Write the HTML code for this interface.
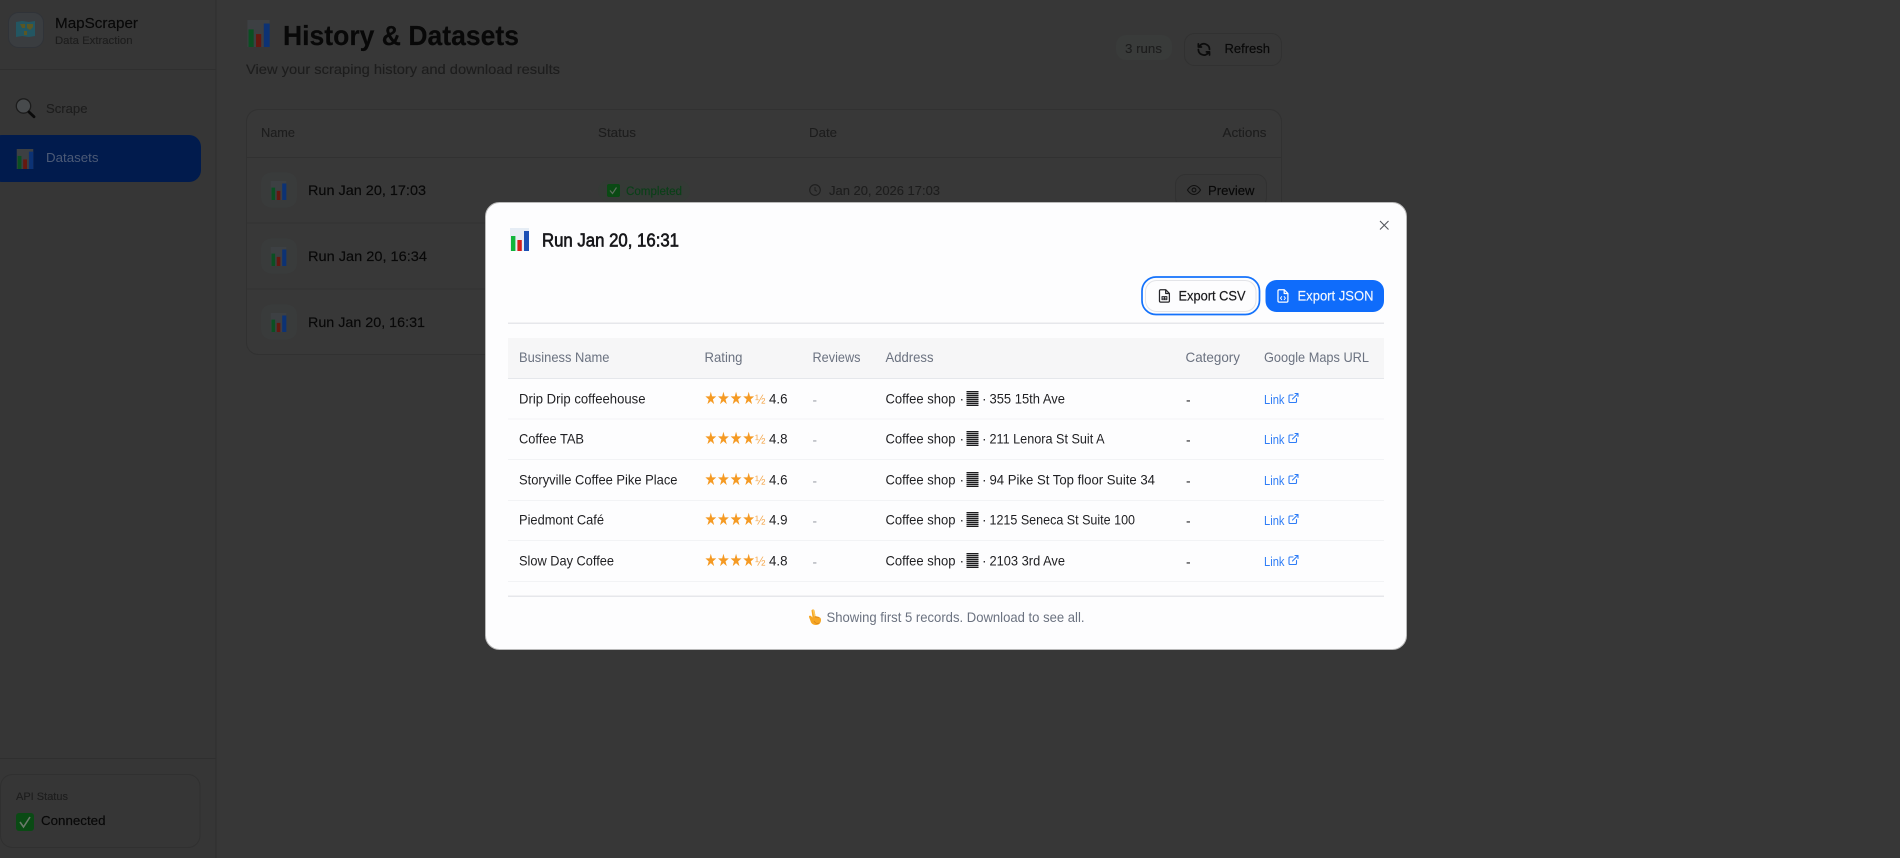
<!DOCTYPE html>
<html lang="en"><head><meta charset="utf-8"><title>MapScraper - History &amp; Datasets</title>
<style>
html,body{margin:0;padding:0;width:1900px;height:858px;overflow:hidden;background:#363636}
svg{display:block;position:absolute;left:0;top:0}
text{font-family:"Liberation Sans",sans-serif;white-space:pre}
.h{font-size:13.8px;fill:#6b7280}
.c{font-size:13.8px;fill:#1f1f22}
.g{fill:#9a9ea6;font-size:13.5px}
.lk{font-size:13px;fill:#2f7df6}
.st{font-family:"DejaVu Sans",sans-serif;font-size:17px;fill:#f59a23}
.hf{font-size:12.5px;fill:#f5ac55}
.d{fill:#080808;stroke:#080808;stroke-width:.15px}
.m{fill:#1d1d1d;stroke:#1d1d1d;stroke-width:.12px}
</style></head><body>
<svg width="1900" height="858" viewBox="0 0 1900 858" xmlns="http://www.w3.org/2000/svg">
<defs>
<symbol id="chartD" viewBox="0 0 19 23"><rect width="19" height="23" fill="#3d4043"/><rect x="1" y="8" width="4.4" height="15" fill="#0a4f22"/><rect x="7.4" y="12" width="4.4" height="11" fill="#651810"/><rect x="14" y="3" width="5" height="20" fill="#0c3274"/></symbol>
<symbol id="chartL" viewBox="0 0 19 23"><rect width="19" height="23" fill="#e6edf5"/><rect x="1" y="8" width="4.4" height="15" fill="#0fb53c"/><rect x="7.4" y="12" width="4.4" height="11" fill="#d4201c"/><rect x="14" y="3" width="5" height="20" fill="#1b50b5"/></symbol>
<pattern id="bars" width="4" height="2" patternUnits="userSpaceOnUse" patternTransform="translate(0 1.5)"><rect width="4" height="1.4" fill="#1c1c1e"/></pattern>
<symbol id="ext" viewBox="0 0 24 24"><path d="M18 13v6a2 2 0 0 1-2 2H5a2 2 0 0 1-2-2V8a2 2 0 0 1 2-2h6M15 3h6v6M10 14L21 3" fill="none" stroke="#2f7df6" stroke-width="2.2" stroke-linecap="round" stroke-linejoin="round"/></symbol>
<filter id="soft" color-interpolation-filters="sRGB" x="0" y="0" width="100%" height="100%"><feGaussianBlur stdDeviation="0.25"/></filter>
</defs>

<!-- dimmed page -->
<g filter="url(#soft)">
<rect width="1900" height="858" fill="#373737"/>
<rect width="216" height="858" fill="#363636"/>
<rect x="215.5" width="1" height="858" fill="#2f2f2f"/>
<rect y="69" width="216" height="1" fill="#2f2f2f"/>
<rect y="758" width="216" height="1" fill="#2f2f2f"/>

<rect x="8.5" y="12.5" width="35" height="35" rx="10" fill="#3a3d40" stroke="#303338"/>
<path d="M16 22l6-1 7 1 6-1v15l-6 1-7-1-6 1z" fill="#235662"/>
<path d="M20 24h5v4h-3zM27 24h6v3l-3 3-3-2zM24 31h3v4h-3z" fill="#5a5724"/>
<text x="55" y="28" class="d" font-size="15" textLength="83" lengthAdjust="spacingAndGlyphs">MapScraper</text>
<text x="55" y="44" class="m" font-size="11" textLength="77.5" lengthAdjust="spacingAndGlyphs">Data Extraction</text>

<circle cx="23.5" cy="106" r="7.2" fill="#474a4c" stroke="#1c1c1c" stroke-width="1.3"/>
<path d="M29 112l5 4.800" stroke="#0a0a0a" stroke-width="2.800" stroke-linecap="round"/>
<text x="46" y="113" class="m" font-size="13" textLength="41.5" lengthAdjust="spacingAndGlyphs">Scrape</text>

<rect x="-10" y="135" width="211" height="47" rx="12" fill="#011b4d"/>
<use href="#chartD" x="16" y="149" width="18" height="20"/>
<text x="46" y="162" fill="#4c5a76" font-size="13" textLength="52.5" lengthAdjust="spacingAndGlyphs">Datasets</text>

<rect x="0.5" y="774.5" width="199.5" height="73" rx="12" fill="#363636" stroke="#303030"/>
<text x="16" y="800" class="m" font-size="11" textLength="52" lengthAdjust="spacingAndGlyphs">API Status</text>
<rect x="16" y="813" width="18" height="18" rx="3" fill="#0a4a14"/>
<path d="M20 822l3.500 5 6.500-10" fill="none" stroke="#6c7a6c" stroke-width="1.6"/>
<text x="41" y="825" class="d" font-size="13" textLength="64.5" lengthAdjust="spacingAndGlyphs">Connected</text>

<use href="#chartD" x="247" y="20" width="23" height="27"/>
<text x="283" y="45" class="d" font-size="28" font-weight="700" textLength="236" lengthAdjust="spacingAndGlyphs">History &amp; Datasets</text>
<text x="246" y="74" class="m" font-size="14" textLength="314" lengthAdjust="spacingAndGlyphs">View your scraping history and download results</text>

<rect x="1116" y="35" width="56" height="25" rx="10" fill="#393b3a"/>
<text x="1125" y="53" class="m" font-size="12.5" textLength="37" lengthAdjust="spacingAndGlyphs">3 runs</text>
<rect x="1184.5" y="33.5" width="97" height="32" rx="10" fill="#373737" stroke="#313131"/>
<g transform="translate(1196.500 42) scale(.62)" fill="none" stroke="#0c0c0c" stroke-width="2.800" stroke-linecap="round" stroke-linejoin="round"><path d="M21 12a9 9 0 0 0-15.500-6.200L3 8M3 3v5h5M3 12a9 9 0 0 0 15.500 6.200L21 16M21 21v-5h-5"/></g>
<text x="1224.5" y="53" class="d" font-size="13" textLength="45.5" lengthAdjust="spacingAndGlyphs">Refresh</text>

<rect x="246.5" y="109.5" width="1035" height="245" rx="12" fill="#383838" stroke="#313131"/>
<rect x="247" y="157" width="1034" height="1" fill="#313131"/>
<rect x="247" y="222.5" width="1034" height="1" fill="#323232"/>
<rect x="247" y="288.5" width="1034" height="1" fill="#323232"/>
<text x="261" y="137" class="m" font-size="13" textLength="34" lengthAdjust="spacingAndGlyphs">Name</text>
<text x="598" y="137" class="m" font-size="13" textLength="38" lengthAdjust="spacingAndGlyphs">Status</text>
<text x="809" y="137" class="m" font-size="13" textLength="28" lengthAdjust="spacingAndGlyphs">Date</text>
<text x="1222.5" y="137" class="m" font-size="13" textLength="44" lengthAdjust="spacingAndGlyphs">Actions</text>

<rect x="261" y="172.5" width="36" height="35" rx="10" fill="#393b3b"/><use href="#chartD" x="270" y="181" width="17" height="19"/>
<rect x="261" y="238.5" width="36" height="35" rx="10" fill="#393b3b"/><use href="#chartD" x="270" y="247" width="17" height="19"/>
<rect x="261" y="304.5" width="36" height="35" rx="10" fill="#393b3b"/><use href="#chartD" x="270" y="313" width="17" height="19"/>
<text x="308" y="195" class="d" font-size="14" textLength="118" lengthAdjust="spacingAndGlyphs">Run Jan 20, 17:03</text>
<text x="308" y="261" class="d" font-size="14" textLength="119" lengthAdjust="spacingAndGlyphs">Run Jan 20, 16:34</text>
<text x="308" y="327" class="d" font-size="14" textLength="117" lengthAdjust="spacingAndGlyphs">Run Jan 20, 16:31</text>

<rect x="598" y="180" width="92" height="22" rx="11" fill="#353a36"/>
<rect x="607" y="184" width="13" height="13" rx="2" fill="#0a4a14"/>
<path d="M610 190.500l2.500 3 4-6" fill="none" stroke="#5e6e5e" stroke-width="1.200"/>
<text x="626" y="195" fill="#0a4018" stroke="#0a4018" stroke-width=".15" font-size="11.500" textLength="56" lengthAdjust="spacingAndGlyphs">Completed</text>
<circle cx="815" cy="190" r="5.300" fill="none" stroke="#1e1e1e" stroke-width="1.100"/><path d="M815 187v3.300l2 1" fill="none" stroke="#1e1e1e" stroke-width="1"/>
<text x="829" y="195" class="m" font-size="13" textLength="111" lengthAdjust="spacingAndGlyphs">Jan 20, 2026 17:03</text>
<rect x="1175.500" y="174.500" width="91" height="33" rx="10" fill="#373737" stroke="#313131"/>
<path d="M1187.500 190s2.500-4.500 6.500-4.500 6.500 4.500 6.500 4.500-2.500 4.500-6.500 4.500-6.500-4.500-6.500-4.500z" fill="none" stroke="#101010" stroke-width="1.100"/><circle cx="1194" cy="190" r="1.900" fill="none" stroke="#101010" stroke-width="1.100"/>
<text x="1208" y="195" class="d" font-size="13" textLength="46.500" lengthAdjust="spacingAndGlyphs">Preview</text>
</g>

<!-- modal -->
<rect x="485.500" y="202.500" width="921" height="447" rx="14" fill="#fdfdfe" stroke="#b9b9b9" stroke-width="1"/>
<use href="#chartL" x="510" y="228" width="19" height="23"/>
<text x="542" y="246.500" font-size="18.500" fill="#17171a" stroke="#17171a" stroke-width=".65" textLength="137" lengthAdjust="spacingAndGlyphs">Run Jan 20, 16:31</text>
<path d="M1380 221l8.500 8.500M1388.500 221l-8.500 8.500" stroke="#55585e" stroke-width="1.100" fill="none"/>

<rect x="1142" y="277" width="117.500" height="37.500" rx="14" fill="none" stroke="#1472fb" stroke-width="1.700"/>
<rect x="1145.500" y="280.500" width="110.500" height="31" rx="11" fill="#fdfdfe" stroke="#e3e4e8"/>
<g transform="translate(1157 288.500) scale(.62)" fill="none" stroke="#26262a" stroke-width="2" stroke-linejoin="round" stroke-linecap="round"><path d="M14 2H6a2 2 0 0 0-2 2v16a2 2 0 0 0 2 2h12a2 2 0 0 0 2-2V8zM14 2v6h6"/><path d="M8 13h8v5H8zM12 13v5M8 15.500h8" stroke-width="1.500"/></g>
<text x="1178.500" y="300.500" font-size="13.800" fill="#1a1a1d" stroke="#1a1a1d" stroke-width=".2" textLength="67" lengthAdjust="spacingAndGlyphs">Export CSV</text>

<rect x="1265.500" y="280" width="118.500" height="32" rx="11" fill="#0f6cfb"/>
<g transform="translate(1275.500 288.500) scale(.62)" fill="none" stroke="#fff" stroke-width="2" stroke-linejoin="round" stroke-linecap="round"><path d="M14 2H6a2 2 0 0 0-2 2v16a2 2 0 0 0 2 2h12a2 2 0 0 0 2-2V8zM14 2v6h6"/><path d="M10 13l-2 2.500 2 2.500M14 13l2 2.500-2 2.500" stroke-width="1.500"/></g>
<text x="1297.500" y="300.500" font-size="13.800" fill="#f4f8ff" stroke="#f4f8ff" stroke-width=".15" textLength="76" lengthAdjust="spacingAndGlyphs">Export JSON</text>

<rect x="508" y="322.500" width="876" height="1.500" fill="#e6e7eb"/>
<rect x="508" y="338" width="876" height="40" fill="#f6f6f7"/>
<rect x="508" y="378" width="876" height="1" fill="#e5e7eb"/>
<text x="519" y="362" class="h" textLength="90.500" lengthAdjust="spacingAndGlyphs">Business Name</text>
<text x="704.500" y="362" class="h" textLength="38" lengthAdjust="spacingAndGlyphs">Rating</text>
<text x="812.500" y="362" class="h" textLength="48" lengthAdjust="spacingAndGlyphs">Reviews</text>
<text x="885.500" y="362" class="h" textLength="48" lengthAdjust="spacingAndGlyphs">Address</text>
<text x="1185.500" y="362" class="h" textLength="54.500" lengthAdjust="spacingAndGlyphs">Category</text>
<text x="1264" y="362" class="h" textLength="105" lengthAdjust="spacingAndGlyphs">Google Maps URL</text>

<g fill="#f2f3f5"><rect x="508" y="418.500" width="876" height="1"/><rect x="508" y="459" width="876" height="1"/><rect x="508" y="500" width="876" height="1"/><rect x="508" y="540" width="876" height="1"/><rect x="508" y="581" width="876" height="1"/></g>

<!-- row 1 -->
<g transform="translate(0 403.500)">
<text x="519" class="c" textLength="126.500" lengthAdjust="spacingAndGlyphs">Drip Drip coffeehouse</text>
<text x="704.500" y="0.500" class="st" textLength="50.500" lengthAdjust="spacingAndGlyphs">★★★★</text><text x="755" class="hf" textLength="10.500" lengthAdjust="spacingAndGlyphs">½</text>
<text x="769" class="c" textLength="18.500" lengthAdjust="spacingAndGlyphs">4.6</text>
<text x="812.500" y="1" class="g">-</text>
<text x="885.500" class="c" textLength="70" lengthAdjust="spacingAndGlyphs">Coffee shop</text><text x="959.500" class="c">·</text>
<rect x="966.500" y="-12.500" width="12" height="15" fill="url(#bars)"/><text x="982" class="c">·</text>
<text x="989.500" class="c" textLength="75.500" lengthAdjust="spacingAndGlyphs">355 15th Ave</text>
<text x="1186" y="1" class="c">-</text>
<text x="1264" y="0.500" class="lk" textLength="20.500" lengthAdjust="spacingAndGlyphs">Link</text><use href="#ext" x="1287.500" y="-11.500" width="12" height="12"/>
</g>
<!-- row 2 -->
<g transform="translate(0 443.500)">
<text x="519" class="c" textLength="65" lengthAdjust="spacingAndGlyphs">Coffee TAB</text>
<text x="704.500" y="0.500" class="st" textLength="50.500" lengthAdjust="spacingAndGlyphs">★★★★</text><text x="755" class="hf" textLength="10.500" lengthAdjust="spacingAndGlyphs">½</text>
<text x="769" class="c" textLength="18.500" lengthAdjust="spacingAndGlyphs">4.8</text>
<text x="812.500" y="1" class="g">-</text>
<text x="885.500" class="c" textLength="70" lengthAdjust="spacingAndGlyphs">Coffee shop</text><text x="959.500" class="c">·</text>
<rect x="966.500" y="-12.500" width="12" height="15" fill="url(#bars)"/><text x="982" class="c">·</text>
<text x="989.500" class="c" textLength="115" lengthAdjust="spacingAndGlyphs">211 Lenora St Suit A</text>
<text x="1186" y="1" class="c">-</text>
<text x="1264" y="0.500" class="lk" textLength="20.500" lengthAdjust="spacingAndGlyphs">Link</text><use href="#ext" x="1287.500" y="-11.500" width="12" height="12"/>
</g>
<!-- row 3 -->
<g transform="translate(0 484.500)">
<text x="519" class="c" textLength="158.500" lengthAdjust="spacingAndGlyphs">Storyville Coffee Pike Place</text>
<text x="704.500" y="0.500" class="st" textLength="50.500" lengthAdjust="spacingAndGlyphs">★★★★</text><text x="755" class="hf" textLength="10.500" lengthAdjust="spacingAndGlyphs">½</text>
<text x="769" class="c" textLength="18.500" lengthAdjust="spacingAndGlyphs">4.6</text>
<text x="812.500" y="1" class="g">-</text>
<text x="885.500" class="c" textLength="70" lengthAdjust="spacingAndGlyphs">Coffee shop</text><text x="959.500" class="c">·</text>
<rect x="966.500" y="-12.500" width="12" height="15" fill="url(#bars)"/><text x="982" class="c">·</text>
<text x="989.500" class="c" textLength="165.500" lengthAdjust="spacingAndGlyphs">94 Pike St Top floor Suite 34</text>
<text x="1186" y="1" class="c">-</text>
<text x="1264" y="0.500" class="lk" textLength="20.500" lengthAdjust="spacingAndGlyphs">Link</text><use href="#ext" x="1287.500" y="-11.500" width="12" height="12"/>
</g>
<!-- row 4 -->
<g transform="translate(0 524.500)">
<text x="519" class="c" textLength="85" lengthAdjust="spacingAndGlyphs">Piedmont Café</text>
<text x="704.500" y="0.500" class="st" textLength="50.500" lengthAdjust="spacingAndGlyphs">★★★★</text><text x="755" class="hf" textLength="10.500" lengthAdjust="spacingAndGlyphs">½</text>
<text x="769" class="c" textLength="18.500" lengthAdjust="spacingAndGlyphs">4.9</text>
<text x="812.500" y="1" class="g">-</text>
<text x="885.500" class="c" textLength="70" lengthAdjust="spacingAndGlyphs">Coffee shop</text><text x="959.500" class="c">·</text>
<rect x="966.500" y="-12.500" width="12" height="15" fill="url(#bars)"/><text x="982" class="c">·</text>
<text x="989.500" class="c" textLength="145.500" lengthAdjust="spacingAndGlyphs">1215 Seneca St Suite 100</text>
<text x="1186" y="1" class="c">-</text>
<text x="1264" y="0.500" class="lk" textLength="20.500" lengthAdjust="spacingAndGlyphs">Link</text><use href="#ext" x="1287.500" y="-11.500" width="12" height="12"/>
</g>
<!-- row 5 -->
<g transform="translate(0 565.500)">
<text x="519" class="c" textLength="95" lengthAdjust="spacingAndGlyphs">Slow Day Coffee</text>
<text x="704.500" y="0.500" class="st" textLength="50.500" lengthAdjust="spacingAndGlyphs">★★★★</text><text x="755" class="hf" textLength="10.500" lengthAdjust="spacingAndGlyphs">½</text>
<text x="769" class="c" textLength="18.500" lengthAdjust="spacingAndGlyphs">4.8</text>
<text x="812.500" y="1" class="g">-</text>
<text x="885.500" class="c" textLength="70" lengthAdjust="spacingAndGlyphs">Coffee shop</text><text x="959.500" class="c">·</text>
<rect x="966.500" y="-12.500" width="12" height="15" fill="url(#bars)"/><text x="982" class="c">·</text>
<text x="989.500" class="c" textLength="75.500" lengthAdjust="spacingAndGlyphs">2103 3rd Ave</text>
<text x="1186" y="1" class="c">-</text>
<text x="1264" y="0.500" class="lk" textLength="20.500" lengthAdjust="spacingAndGlyphs">Link</text><use href="#ext" x="1287.500" y="-11.500" width="12" height="12"/>
</g>

<rect x="508" y="595.500" width="876" height="1.500" fill="#e6e7eb"/>
<path d="M811.500 610.500c.6-1.500 2.500-1.500 3 0l1 5.500 3.500 1c1.500.5 2 1.500 2 3 0 3-2 5-5 5-3.500 0-5-2-5.500-4l-1.500-4c-.3-1.200 1-1.800 2-1l1.500 1.500z" fill="#f6a623"/>
<path d="M812.500 609.800c.8-.4 1.700 0 2 .7l1 5.500-1.500.5z" fill="#fcc75a"/>
<path d="M815 617l4 .4M814 621c1 2 3 3 5.500 2" fill="none" stroke="#d9841a" stroke-width=".8"/>
<text x="826.500" y="622" font-size="13.800" fill="#6b7280" textLength="258" lengthAdjust="spacingAndGlyphs">Showing first 5 records. Download to see all.</text>
</svg>
</body></html>
